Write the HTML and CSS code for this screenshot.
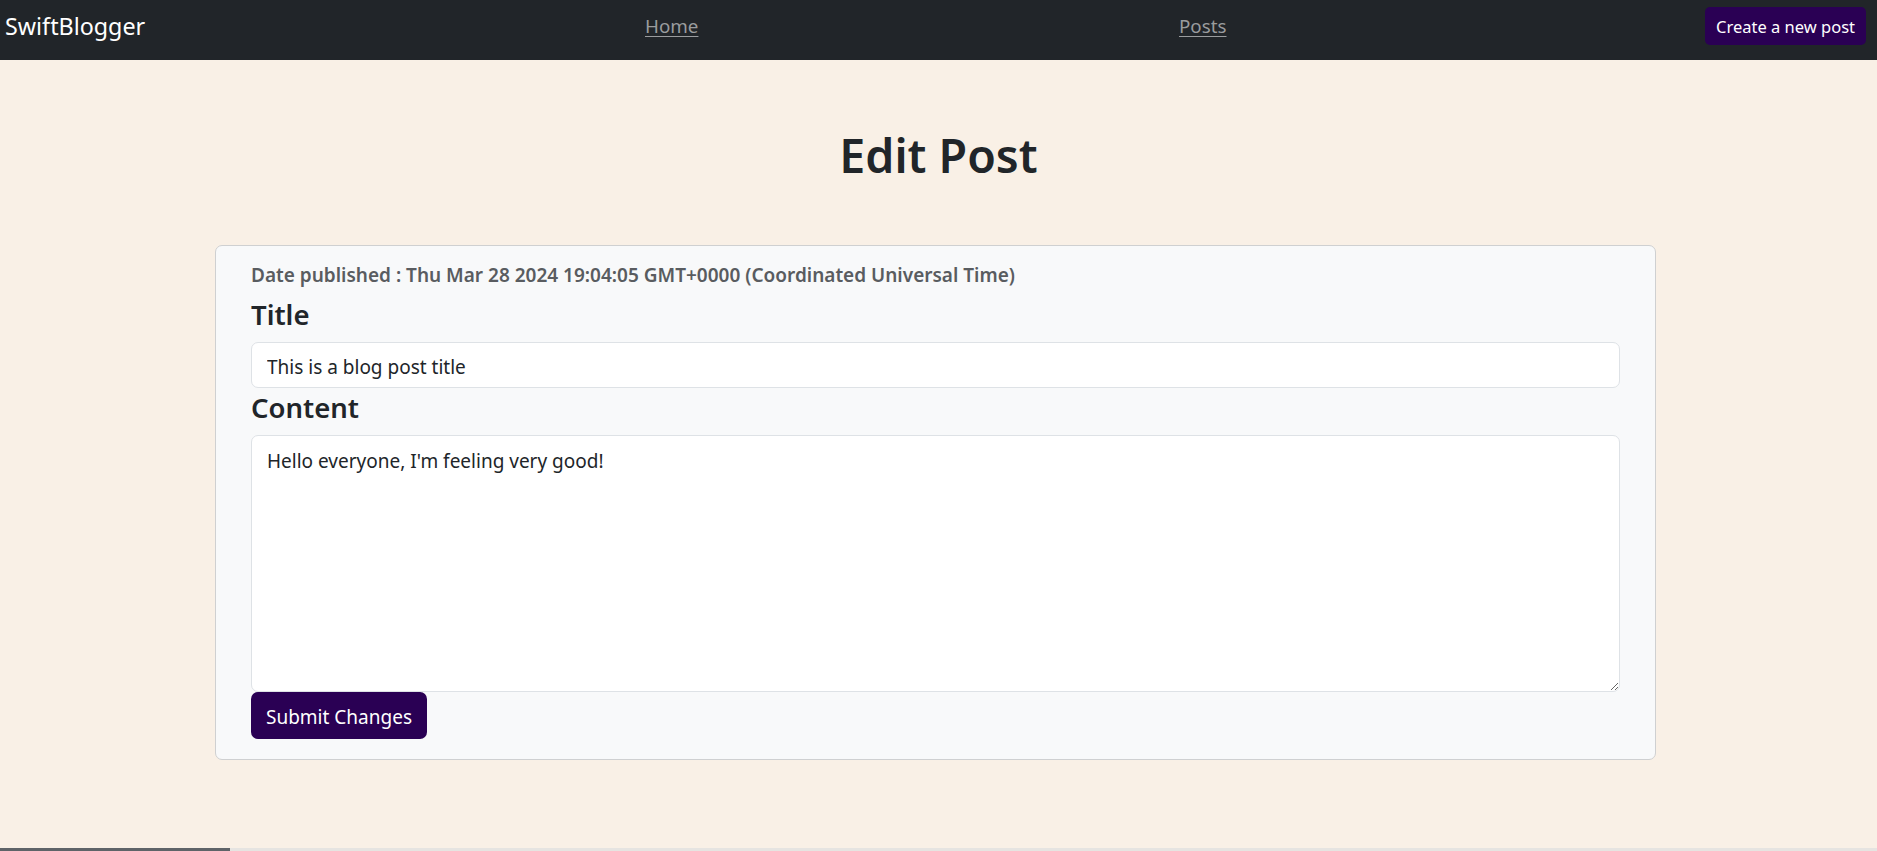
FILE: index.html
```html
<!DOCTYPE html>
<html lang="en">
<head>
<meta charset="utf-8">
<title>SwiftBlogger - Edit Post</title>
<link rel="stylesheet" href="styles.css">
</head>
<body>
<nav class="navbar">
  <a class="brand" href="#">SwiftBlogger</a>
  <a class="nav-link" href="#">Home</a>
  <a class="nav-link" href="#">Posts</a>
  <a class="btn-create" href="#">Create a new post</a>
</nav>
<main class="page">
  <h1 class="page-title">Edit Post</h1>
  <form class="card">
    <p class="date">Date published : Thu Mar 28 2024 19:04:05 GMT+0000 (Coordinated Universal Time)</p>
    <label class="field-label" for="title">Title</label>
    <input class="form-control" id="title" type="text" value="This is a blog post title">
    <label class="field-label" for="content">Content</label>
    <textarea class="form-control textarea" id="content">Hello everyone, I'm feeling very good!</textarea>
    <button class="btn-submit" type="button">Submit Changes</button>
  </form>
</main>
<div class="hscroll"><div class="hscroll-thumb"></div></div>
</body>
</html>
```
FILE: styles.css
```css
* { box-sizing: border-box; }
html, body { margin: 0; padding: 0; }
body {
  background: #f9f0e6;
  font-family: "Noto Sans", "Open Sans", sans-serif;
  color: #212529;
  min-height: 851px;
}
.navbar {
  display: grid;
  grid-template-columns: 640px 534px 1fr auto;
  align-items: center;
  height: 60px;
  padding: 6px 11px 15px 5px;
  background: #212529;
}
.brand {
  color: #ffffff;
  font-size: 23.3px;
  text-decoration: none;
  line-height: 1;
  padding-top: 2px;
}
.nav-link {
  color: #9a9c9e;
  font-size: 18.8px;
  line-height: 1;
  justify-self: start;
  text-decoration: underline;
  text-underline-offset: 3px;
  padding-top: 2px;
}
.btn-create {
  display: flex;
  align-items: center;
  height: 38px;
  padding: 1px 11px 0;
  background: #2a0054;
  color: #ffffff;
  font-size: 16.5px;
  text-decoration: none;
  border-radius: 5px;
}
.page {
  display: flex;
  flex-direction: column;
  align-items: center;
}
.page-title {
  margin: 67px 0 60px;
  font-size: 46.5px;
  font-weight: 600;
  line-height: 57.6px;
  color: #212529;
}
.card {
  display: flex;
  flex-direction: column;
  align-items: flex-start;
  width: 1441px;
  margin: 0 0 0 -6px;
  padding: 15px 35px 20px;
  background: #f8f9fa;
  border: 1px solid #cfd0d1;
  border-radius: 7px;
}
.date {
  margin: 0 0 9px;
  font-size: 19px;
  line-height: 28.8px;
  font-weight: 600;
  color: #595c60;
}
.field-label {
  margin-bottom: 9px;
  font-size: 27.5px;
  font-weight: 600;
  line-height: 34.6px;
  color: #212529;
}
.form-control {
  width: 100%;
  padding: 7px 15px;
  font-family: inherit;
  font-size: 19px;
  line-height: 28.8px;
  color: #212529;
  background: #ffffff;
  border: 1px solid #dee2e6;
  border-radius: 7px;
  outline: none;
}
input.form-control {
  height: 46px;
  padding-top: 9px;
  padding-bottom: 5px;
  margin-bottom: 3px;
}
.textarea {
  height: 257px;
  padding-top: 11px;
  resize: vertical;
  display: block;
}
.btn-submit {
  height: 47px;
  padding: 3px 15px 0;
  font-family: inherit;
  font-size: 19px;
  color: #ffffff;
  background: #2a0054;
  border: none;
  border-radius: 7px;
}
.hscroll {
  position: fixed;
  left: 0;
  right: 0;
  bottom: 0;
  height: 3px;
  background: #e6e4e1;
}
.hscroll-thumb {
  width: 230px;
  height: 3px;
  background: #5f6368;
}
```
